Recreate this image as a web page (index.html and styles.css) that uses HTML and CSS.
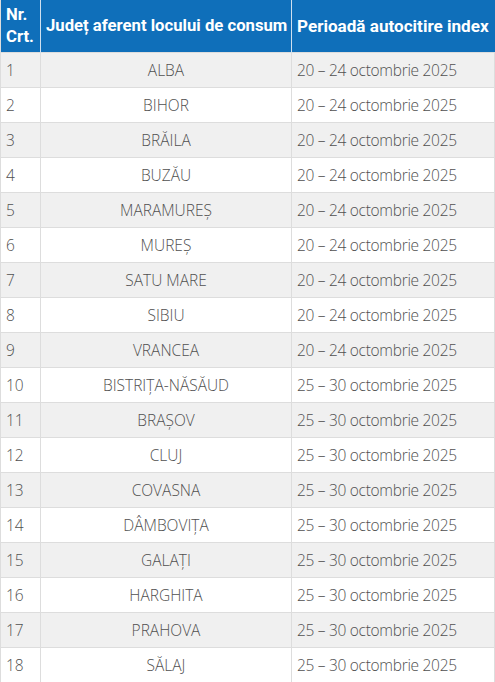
FILE: index.html
```html
<!DOCTYPE html>
<html lang="ro">
<head>
<meta charset="utf-8">
<link rel="stylesheet" href="styles.css">
</head>
<body>
<table class="tbl">
  <colgroup>
    <col class="c1"><col class="c2"><col class="c3">
  </colgroup>
  <thead>
    <tr>
      <th class="nr">Nr.<br>Crt.</th>
      <th>Județ aferent locului de consum</th>
      <th>Perioadă autocitire index</th>
    </tr>
  </thead>
  <tbody>
    <tr><td class="num">1</td><td class="jud">ALBA</td><td class="per">20 – 24 octombrie 2025</td></tr>
    <tr><td class="num">2</td><td class="jud">BIHOR</td><td class="per">20 – 24 octombrie 2025</td></tr>
    <tr><td class="num">3</td><td class="jud">BRĂILA</td><td class="per">20 – 24 octombrie 2025</td></tr>
    <tr><td class="num">4</td><td class="jud">BUZĂU</td><td class="per">20 – 24 octombrie 2025</td></tr>
    <tr><td class="num">5</td><td class="jud">MARAMUREȘ</td><td class="per">20 – 24 octombrie 2025</td></tr>
    <tr><td class="num">6</td><td class="jud">MUREȘ</td><td class="per">20 – 24 octombrie 2025</td></tr>
    <tr><td class="num">7</td><td class="jud">SATU MARE</td><td class="per">20 – 24 octombrie 2025</td></tr>
    <tr><td class="num">8</td><td class="jud">SIBIU</td><td class="per">20 – 24 octombrie 2025</td></tr>
    <tr><td class="num">9</td><td class="jud">VRANCEA</td><td class="per">20 – 24 octombrie 2025</td></tr>
    <tr><td class="num">10</td><td class="jud">BISTRIȚA-NĂSĂUD</td><td class="per">25 – 30 octombrie 2025</td></tr>
    <tr><td class="num">11</td><td class="jud">BRAȘOV</td><td class="per">25 – 30 octombrie 2025</td></tr>
    <tr><td class="num">12</td><td class="jud">CLUJ</td><td class="per">25 – 30 octombrie 2025</td></tr>
    <tr><td class="num">13</td><td class="jud">COVASNA</td><td class="per">25 – 30 octombrie 2025</td></tr>
    <tr><td class="num">14</td><td class="jud">DÂMBOVIȚA</td><td class="per">25 – 30 octombrie 2025</td></tr>
    <tr><td class="num">15</td><td class="jud">GALAȚI</td><td class="per">25 – 30 octombrie 2025</td></tr>
    <tr><td class="num">16</td><td class="jud">HARGHITA</td><td class="per">25 – 30 octombrie 2025</td></tr>
    <tr><td class="num">17</td><td class="jud">PRAHOVA</td><td class="per">25 – 30 octombrie 2025</td></tr>
    <tr><td class="num">18</td><td class="jud">SĂLAJ</td><td class="per">25 – 30 octombrie 2025</td></tr>
  </tbody>
</table>
</body>
</html>
```
FILE: styles.css
```css
html, body {
  margin: 0;
  padding: 0;
  background: #ffffff;
}
.tbl {
  border-collapse: collapse;
  table-layout: fixed;
  width: 494px;
  font-family: "Open Sans", sans-serif;
}
.c1 { width: 40px; }
.c2 { width: 251px; }
.c3 { width: 203px; }
.tbl th {
  background: #0f6fba;
  color: #ffffff;
  font-family: "Roboto", sans-serif;
  font-weight: 700;
  font-size: 16.7px;
  line-height: 22px;
  text-align: left;
  padding: 3px 4px 4px 5px;
  height: 45px;
  border-left: 1px solid #cfe0ef;
  white-space: nowrap;
}
.tbl th:last-child { font-size: 17.1px; }
.tbl th:first-child { border-left: 1px solid #dddddd; }
.tbl td {
  height: 34px;
  padding: 0 5px;
  font-size: 15.5px;
  font-weight: 300;
  color: #505050;
  border: 1px solid #dddddd;
  white-space: nowrap;
}
.tbl tbody tr:nth-child(odd) td { background: #f0f0f0; }
.tbl td.jud { text-align: center; }
.tbl td.per { text-align: left; letter-spacing: -0.3px; }
```
